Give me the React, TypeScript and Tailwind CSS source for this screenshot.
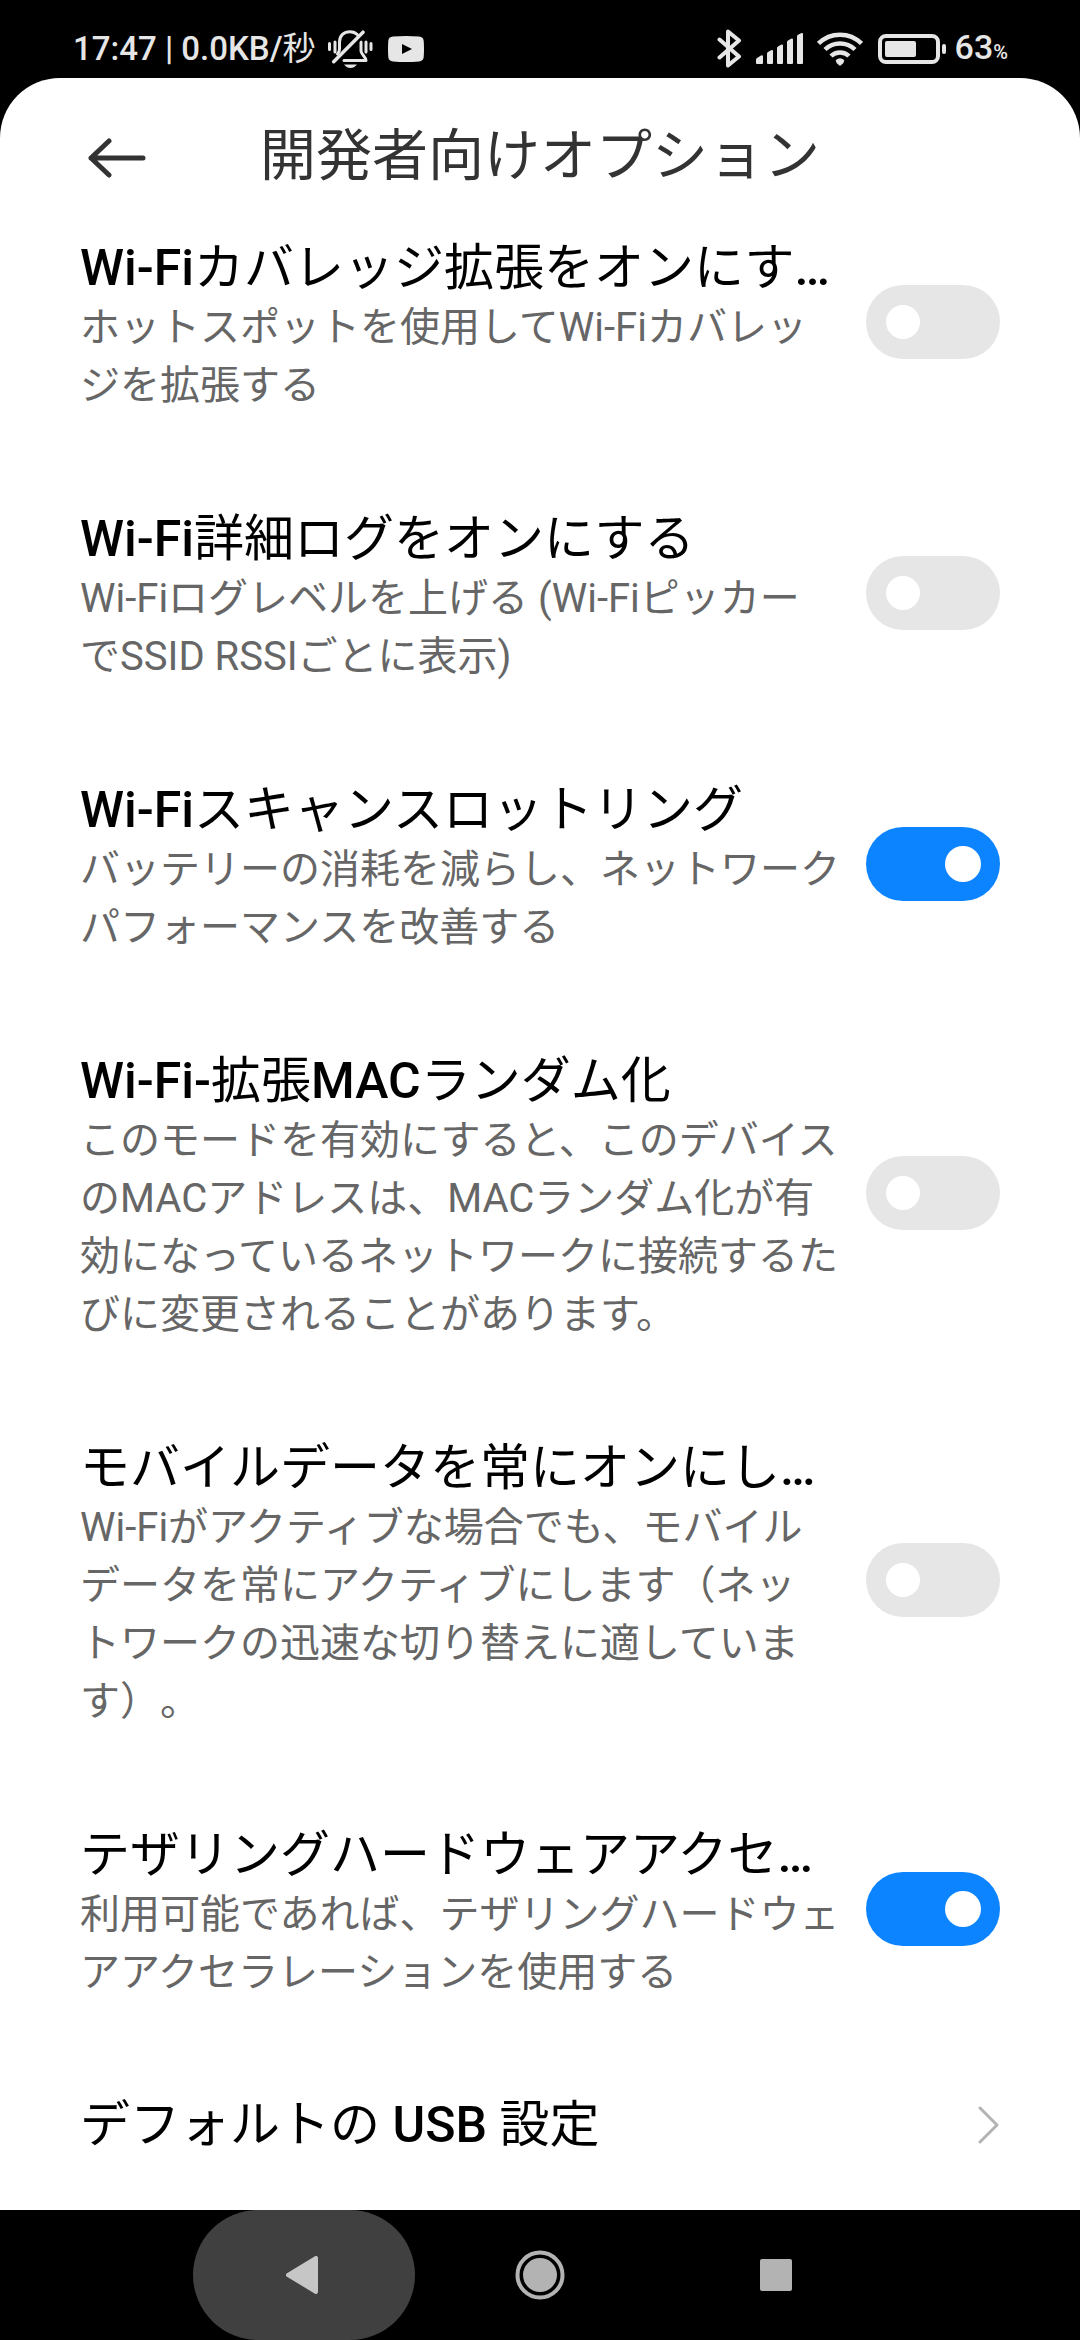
import React, { useState } from 'react'

interface SettingItem {
    id: string
    title: string
    summary: string
    on: boolean
}

const items: SettingItem[] = [
    {
        id: 'wifi-coverage',
        title: 'Wi-Fiカバレッジ拡張をオンにす…',
        summary: 'ホットスポットを使用してWi-Fiカバレッ\nジを拡張する',
        on: false,
    },
    {
        id: 'wifi-log',
        title: 'Wi-Fi詳細ログをオンにする',
        summary: 'Wi-Fiログレベルを上げる (Wi-Fiピッカー\nでSSID RSSIごとに表示)',
        on: false,
    },
    {
        id: 'wifi-scan',
        title: 'Wi-Fiスキャンスロットリング',
        summary: 'バッテリーの消耗を減らし、ネットワーク\nパフォーマンスを改善する',
        on: true,
    },
    {
        id: 'wifi-mac',
        title: 'Wi-Fi-拡張MACランダム化',
        summary:
            'このモードを有効にすると、このデバイス\nのMACアドレスは、MACランダム化が有\n効になっているネットワークに接続するた\nびに変更されることがあります。',
        on: false,
    },
    {
        id: 'mobile-data',
        title: 'モバイルデータを常にオンにし…',
        summary:
            'Wi-Fiがアクティブな場合でも、モバイル\nデータを常にアクティブにします（ネッ\nトワークの迅速な切り替えに適していま\nす）。',
        on: false,
    },
    {
        id: 'tethering',
        title: 'テザリングハードウェアアクセ…',
        summary: '利用可能であれば、テザリングハードウェ\nアアクセラレーションを使用する',
        on: true,
    },
]

// Latin runs are medium, Japanese stays regular
function MixedText({ text }: { text: string }) {
    return (
        <>
            {text.split(/([\x20-\x7e…]+)/).map((part, i) =>
                i % 2 === 1 ? (
                    <span key={i} className="font-medium">
                        {part}
                    </span>
                ) : (
                    part
                )
            )}
        </>
    )
}

function MutedBellIcon() {
    return (
        <svg width="45" height="38" viewBox="0 0 45 38" fill="none">
            <g stroke="currentColor" strokeWidth="3" strokeLinecap="round">
                <path d="M1.500 13.500v6M7 12v10M38 12v10M43 13.500v6" />
                <path d="M9.500 24q2-2 2-5v-7C11.500 5.500 16 1.700 22 1.700c3 0 5.500 1 7.500 3" />
                <path d="M33 12v9c0 3.500 5 5.500 5 9.500H16" strokeLinejoin="round" />
            </g>
            <path d="M7.500 33.500L37.500 3.500" stroke="#000" strokeWidth="3" />
            <path d="M5.700 31.700L35 2.200" stroke="currentColor" strokeWidth="3.500" strokeLinecap="round" />
            <path d="M16 34.500h13c-2 2.500-4 3.500-6.500 3.500s-4.500-1-6.500-3.500z" fill="currentColor" />
        </svg>
    )
}

function VideoIcon() {
    return (
        <svg width="36" height="26" viewBox="0 0 36 26">
            <path d="M5 .6Q18-.6 31 .6q4.500.4 4.700 4.400.6 8 0 16-.2 4-4.700 4.400-13 1.200-26 0Q.5 25 .3 21q-.6-8 0-16Q.5 1 5 .6z" fill="currentColor" />
            <path d="M14 8l10 5-10 5z" fill="#000" />
        </svg>
    )
}

function BluetoothIcon() {
    return (
        <svg width="25" height="39" viewBox="0 0 25 39" fill="none" stroke="currentColor" strokeWidth="4" strokeLinejoin="round" strokeLinecap="round">
            <path d="M2.500 10.500L22 27.500l-11 9v-34l11 9L2.500 28.500" />
        </svg>
    )
}

function SignalIcon() {
    return (
        <svg width="48" height="31" viewBox="0 0 48 31" fill="currentColor">
            <path d="M0 30v-3q0-1.500 1-2l4-2.500q2-.7 2 1V30q0 1-1 1H1q-1 0-1-1z" />
            <path d="M11 30V20.500q0-1 1-1.500l3-1.700q2-.8 2 1V30q0 1-1 1h-4q-1 0-1-1z" />
            <path d="M21 30V15q0-1 1-1.500l3-1.700q2-.8 2 1V30q0 1-1 1h-4q-1 0-1-1z" />
            <path d="M31 30V9q0-1 1-1.500l3-1.700q2-.8 2 1V30q0 1-1 1h-4q-1 0-1-1z" />
            <path d="M41 30V3.200q0-1 1-1.500l3-1.500q2-.8 2 1V30q0 1-1 1h-4q-1 0-1-1z" />
        </svg>
    )
}

function WifiIcon() {
    return (
        <svg width="46" height="34" viewBox="0 0 46 34" fill="none" stroke="currentColor" strokeWidth="4.500">
            <path d="M1.500 11.500a30.500 30.500 0 0 1 43 0" />
            <path d="M8 17.500a21.500 21.500 0 0 1 30 0" />
            <path d="M14 24a13 13 0 0 1 18 0" />
            <path d="M19.500 28.500q3.500-3 7 0l-1 2.500-2.500 2-2.500-2z" fill="currentColor" strokeWidth="1.500" strokeLinejoin="round" />
        </svg>
    )
}

function BatteryIcon() {
    return (
        <svg width="69" height="30" viewBox="0 0 69 30" fill="currentColor">
            <rect x="2" y="2" width="58" height="26" rx="6" fill="none" stroke="currentColor" strokeWidth="4" />
            <rect x="7" y="7" width="31" height="16" rx="2" />
            <rect x="64" y="10" width="4" height="10" rx="2" />
        </svg>
    )
}

function StatusBar() {
    return (
        <div className="flex h-[78px] items-center justify-between bg-black pt-[19px] pr-[72px] pl-[73px] leading-[40px] text-[#e6e6e6]">
            <div className="flex items-center text-[33px]">
                <span>
                    <MixedText text="17:47 | 0.0KB/秒" />
                </span>
                <span className="ml-3 flex items-center gap-[15px]">
                    <MutedBellIcon />
                    <VideoIcon />
                </span>
            </div>
            <div className="flex items-center text-[34px]">
                <BluetoothIcon />
                <span className="ml-[14px] flex items-center gap-[13px]">
                    <SignalIcon />
                    <WifiIcon />
                </span>
                <span className="mr-2 ml-[15px]">
                    <BatteryIcon />
                </span>
                <span className="pt-0.5 font-medium">
                    63<span className="text-[20px]">%</span>
                </span>
            </div>
        </div>
    )
}

function Header() {
    return (
        <header className="grid h-[156px] grid-cols-[1fr_auto_1fr] items-center px-20">
            <button type="button" aria-label="戻る" className="justify-self-start px-2 pt-1 text-[#333333]">
                <svg width="58" height="42" viewBox="0 0 58 42" fill="none" stroke="currentColor" strokeWidth="5" strokeLinecap="round" strokeLinejoin="round">
                    <path d="M21 4L3 21l18 17M3 21h52" />
                </svg>
            </button>
            <h1 className="text-[56px] leading-[66px] text-[#333333]">開発者向けオプション</h1>
        </header>
    )
}

interface SwitchProps {
    id: string
    checked: boolean
    onChange: () => void
}

function Switch({ id, checked, onChange }: SwitchProps) {
    return (
        <span className="relative h-[74px] w-[134px] shrink-0">
            <input
                id={id}
                type="checkbox"
                role="switch"
                checked={checked}
                onChange={onChange}
                className="peer block h-full w-full appearance-none rounded-full bg-[#e6e6e6] checked:bg-[#0d84ff]"
            />
            <span className="pointer-events-none absolute top-5 left-5 size-[34px] rounded-full bg-white peer-checked:top-[19px] peer-checked:right-[19px] peer-checked:left-auto peer-checked:size-9" />
        </span>
    )
}

function SettingRow({ item }: { item: SettingItem }) {
    const [on, setOn] = useState(item.on)

    return (
        <li className="flex items-center gap-6 px-20">
            <label htmlFor={item.id} className="min-w-0 flex-1 pt-[51px] pb-[42px]">
                <span className="block text-[50px] leading-[62px] text-black">
                    <MixedText text={item.title} />
                </span>
                <span className="block text-[40px] leading-[58px] whitespace-pre-line text-[#666666] [text-spacing-trim:space-all]">
                    {item.summary}
                </span>
            </label>
            <Switch id={item.id} checked={on} onChange={() => setOn(!on)} />
        </li>
    )
}

function NavigationBar() {
    return (
        <nav className="flex h-[130px] items-center justify-center gap-[14px] bg-black text-[#b3b3b3]">
            <button type="button" aria-label="戻る" className="flex h-full w-[222px] items-center justify-center rounded-full bg-[#404040] pr-1 text-[#c6c6c6]">
                <svg width="32" height="38" viewBox="0 0 32 38" fill="currentColor" stroke="currentColor" strokeWidth="4" strokeLinejoin="round">
                    <path d="M2 19L30 2v34z" />
                </svg>
            </button>
            <button type="button" aria-label="ホーム" className="flex h-full w-[222px] items-center justify-center">
                <svg width="50" height="50" viewBox="0 0 50 50">
                    <circle cx="25" cy="25" r="22.500" fill="none" stroke="currentColor" strokeWidth="4" />
                    <circle cx="25" cy="25" r="17" fill="currentColor" />
                </svg>
            </button>
            <button type="button" aria-label="最近" className="flex h-full w-[222px] items-center justify-center">
                <span className="size-8 rounded-xs bg-[#b3b3b3]" />
            </button>
        </nav>
    )
}

export default function App() {
    return (
        <div className="flex min-h-screen flex-col bg-black font-['Roboto','Noto_Sans_CJK_JP',sans-serif]" lang="ja">
            <StatusBar />
            <main className="flex-1 rounded-t-[60px] bg-white">
                <Header />
                {/* the list is scrolled a little under the header */}
                <ul className="-mt-12">
                    {items.map((item) => (
                        <SettingRow key={item.id} item={item} />
                    ))}
                    <li>
                        <button type="button" className="flex w-full items-center justify-between px-20 pt-[50px] pb-[54px] text-left">
                            <span className="text-[50px] leading-[62px] text-black">
                                <MixedText text="デフォルトの USB 設定" />
                            </span>
                            <svg width="22" height="40" viewBox="0 0 22 40" fill="none" stroke="#b3b3b3" strokeWidth="3" strokeLinecap="round" strokeLinejoin="round">
                                <path d="M2 3l17 17L2 37" />
                            </svg>
                        </button>
                    </li>
                </ul>
            </main>
            <NavigationBar />
        </div>
    )
}
